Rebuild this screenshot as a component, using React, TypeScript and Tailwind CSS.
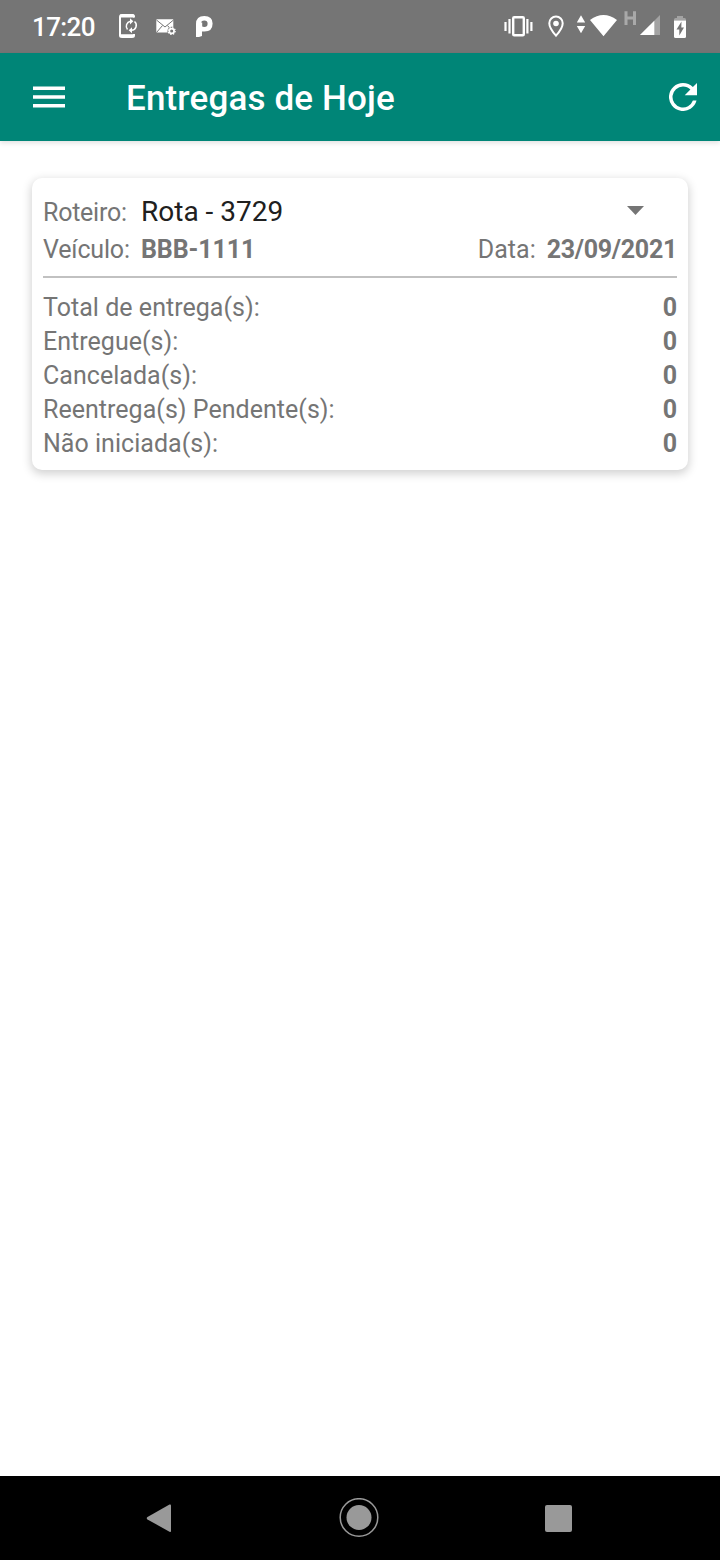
import React from "react";

function StatusBar() {
  return (
    <div className="flex h-[53px] shrink-0 items-start bg-[#757575] pl-8 text-white">
      <span className="h-[53px] w-[84px] text-[26px] font-medium leading-[55px] tracking-[-0.6px]">17:20</span>
      <svg className="mt-3 h-7 w-6" viewBox="116 12 24 28" fill="none" stroke="currentColor">
        <path d="M134 17.500V16.500Q134 15 132.500 15H122Q120 15 120 17V35.500Q120 37 122 37H132Q134 37 134 35.500V34" strokeWidth="2" />
        <path d="M120 34.200H134V37H120zM120 14.500h14v3H120z" fill="currentColor" stroke="none" />
        <path d="M127.500 29.500A5 5 0 0 1 130.500 21.300M134.500 21.500A5 5 0 0 1 131.500 30.300" strokeWidth="1.500" />
        <path d="M130 18.200L133.300 21.300L130 24.400zM132 27.300L128.700 30.300L132 33.300z" fill="currentColor" stroke="none" />
      </svg>
      <svg className="ml-[14px] mt-4 h-5 w-6" viewBox="154 16 24 20">
        <rect x="156.300" y="19.300" width="17" height="13.200" rx="0.500" fill="currentColor" />
        <path d="M156.500 20L165 27L173.500 20M156.500 32.500L162.500 25.500M173.500 32.500L167.500 25.500" fill="none" stroke="#757575" strokeWidth="1" />
        <circle cx="171.700" cy="31" r="4.300" fill="#757575" />
        <circle cx="171.700" cy="31" r="2.400" fill="none" stroke="currentColor" strokeWidth="1.700" />
        <circle cx="171.700" cy="31" r="3.500" fill="none" stroke="currentColor" strokeWidth="1.200" strokeDasharray="1.375" />
      </svg>
      <svg className="ml-4 mt-[14px] h-6 w-5" viewBox="194 14 20 24">
        <path fillRule="evenodd" fill="currentColor" d="M196 37V24Q196 16 204.300 16Q212.600 16 212.600 23.500Q212.600 31.500 204.500 31.500H202V36L199 37zM204.300 20.500A3.300 3.300 0 1 0 204.300 27.100A3.300 3.300 0 1 0 204.300 20.500z" />
        <path d="M201.600 22.500V27" stroke="currentColor" strokeWidth="1.200" />
      </svg>
      <svg className="ml-[288px] mt-[14px] h-6 w-8" viewBox="502 14 32 24" fill="none" stroke="currentColor">
        <rect x="513.200" y="17.200" width="10.600" height="18" rx="1" strokeWidth="2.400" />
        <path d="M509.500 19V33.500M527.400 19V33.500M505.500 22V31M531.400 22V31" strokeWidth="2.200" />
      </svg>
      <svg className="ml-3 mt-[14px] h-6 w-5" viewBox="546 14 20 24">
        <path d="M556 16.600A6.700 6.700 0 0 0 549.300 23.300C549.300 28.300 556 35.700 556 35.700S562.700 28.300 562.700 23.300A6.700 6.700 0 0 0 556 16.600z" fill="none" stroke="currentColor" strokeWidth="2" />
        <circle cx="556" cy="23.500" r="2.800" fill="currentColor" />
      </svg>
      <svg className="ml-2 mt-3 h-[26px] w-12" viewBox="574 12 48 26" fill="currentColor">
        <path d="M576.800 22.500L581 15.300L585.200 22.500zM576.800 26L581 33.200L585.200 26zM590 20Q603.500 10 617 20L603.500 36.200z" />
      </svg>
      <svg className="ml-[2px] mt-[9px] h-7 w-[37px]" viewBox="624 9 37 28" fill="none">
        <path d="M626 11.200V25M634.500 11.200V25M626 18.100H634.500" stroke="#a9a9a9" strokeWidth="3" />
        <path d="M640 35L660 15V35z" fill="#a3a3a3" />
        <path d="M640 35L654.300 20.700V35z" fill="currentColor" />
      </svg>
      <svg className="ml-[11px] mt-[14px] h-[26px] w-4" viewBox="672 14 16 26">
        <path d="M674 20.500V19.500Q674 18 675.500 18H677V16H683V18H684.500Q686 18 686 19.500V20.500z" fill="#a3a3a3" />
        <path d="M674 20.500H686V36.500Q686 38 684.500 38H675.500Q674 38 674 36.500z" fill="currentColor" />
        <path d="M681.500 21.500L676.500 29.500H679.300V35.500L684 27.500H681.300z" fill="#757575" />
      </svg>
    </div>
  );
}

function AppBar() {
  return (
    <header className="flex h-[88px] shrink-0 items-center bg-[#008577] pl-[33px] pr-[23px] text-white shadow-[0_2px_5px_rgba(0,0,0,0.12)]">
      <svg className="h-[22px] w-8" viewBox="0 0 32 22" fill="currentColor">
        <path d="M0 .400H32V3.900H0zM0 9.250H32V12.750H0zM0 18.100H32V21.600H0z" />
      </svg>
      <h1 className="ml-[61px] flex-1 whitespace-nowrap pt-1 text-[35px] font-medium leading-[84px] tracking-[0.15px]">Entregas de Hoje</h1>
      <svg className="h-7 w-7" viewBox="4 4 16 16" fill="currentColor">
        <path d="M17.650 6.350A7.958 7.958 0 0 0 12 4a8 8 0 1 0 7.730 10h-2.080A6 6 0 1 1 12 6c1.660 0 3.140.690 4.220 1.780L13 11h7V4z" />
      </svg>
    </header>
  );
}

const totals = [
  ["Total de entrega(s):", "0"],
  ["Entregue(s):", "0"],
  ["Cancelada(s):", "0"],
  ["Reentrega(s) Pendente(s):", "0"],
  ["Não iniciada(s):", "0"],
];

function RouteCard() {
  return (
    <section className="mx-8 mt-[37px] h-[292px] rounded-[10px] bg-white px-[11px] text-[25px] text-[#757575] shadow-[0_3px_10px_1px_rgba(0,0,0,0.18)]">
      <div className="flex h-[53px] items-end">
        <span className="w-[98px] leading-[36px] tracking-[-0.25px]">Roteiro:</span>
        <span className="flex-1 text-[28px] leading-[38px] text-[#202020]">Rota - 3729</span>
        <svg className="mb-[16px] mr-[33px] h-[9px] w-[17px]" viewBox="0 0 17 9">
          <path d="M0 0H17L8.500 9z" fill="#757575" />
        </svg>
      </div>
      <div className="flex h-[37px] items-center pt-px leading-[36px]">
        <span className="w-[98px] tracking-[-0.15px]">Veículo:</span>
        <span className="flex-1 font-bold tracking-[-0.1px]">BBB-1111</span>
        <span className="mr-[11px]">Data:</span>
        <span className="font-bold tracking-[-0.3px]">23/09/2021</span>
      </div>
      <div className="mt-2 h-[2px] bg-[#c1c1c1]" />
      <dl className="mt-[13px]">
        {totals.map(([label, value]) => (
          <div key={label} className="flex h-[34px] justify-between leading-[34px] tracking-[0.03px]">
            <dt>{label}</dt>
            <dd className="font-bold">{value}</dd>
          </div>
        ))}
      </dl>
    </section>
  );
}

function NavigationBar() {
  return (
    <nav className="flex h-[84px] shrink-0 items-center justify-between bg-black pl-[146px] pr-[148px] text-[#999999]">
      <svg className="h-[30px] w-[26px]" viewBox="0 0 26 30" fill="currentColor">
        <path d="M1.500 14L23.500 1.500Q25 1 25 2.500V28Q25 29.500 23.500 28.700L1.500 16.500Q0 15.200 1.500 14z" />
      </svg>
      <svg className="ml-px h-10 w-10" viewBox="0 0 40 40">
        <circle cx="20" cy="19.500" r="18.800" fill="none" stroke="currentColor" strokeWidth="1.500" />
        <circle cx="20" cy="19.500" r="12.500" fill="currentColor" />
      </svg>
      <span className="h-[27px] w-[27px] rounded-[2px] bg-[#999999]" />
    </nav>
  );
}

export default function App() {
  return (
    <div className="flex h-[1560px] w-[720px] flex-col bg-white font-['Roboto',sans-serif]">
      <StatusBar />
      <AppBar />
      <main className="flex-1">
        <RouteCard />
      </main>
      <NavigationBar />
    </div>
  );
}
